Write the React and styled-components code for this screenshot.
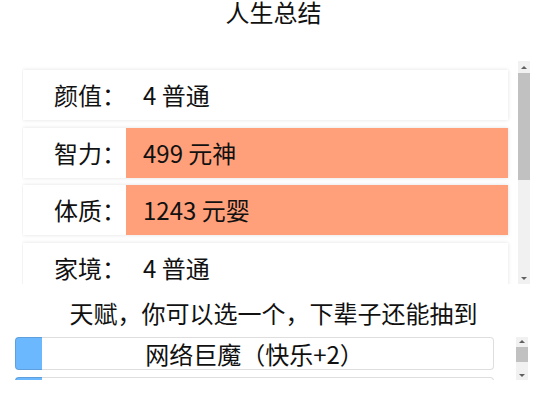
import styled, { createGlobalStyle } from 'styled-components';

const GlobalStyle = createGlobalStyle`
  html, body {
    margin: 0;
    padding: 0;
    background: #fff;
  }
  body {
    font-family: "Noto Sans CJK SC", "Noto Sans", sans-serif;
    color: #111;
  }
`;

const Page = styled.div`
  width: 547px;
`;

const Title = styled.div`
  text-align: center;
  font-size: 24px;
  line-height: 24px;
`;

// a list and its scrollbar side by side
const ScrollBox = styled.div`
  display: flex;
  height: ${(p) => p.$height}px;
  margin: ${(p) => p.$margin};
`;

const SummaryList = styled.div`
  flex: 1;
  min-width: 0;
  padding: 9px 10px 0 1px;
  overflow: hidden;
`;

const Track = styled.div`
  width: 12px;
  flex-shrink: 0;
  display: flex;
  flex-direction: column;
  background: #f1f1f1;
`;

const ArrowButton = styled.div`
  height: ${(p) => p.$size}px;
  flex-shrink: 0;
  display: flex;
  align-items: center;
  justify-content: center;

  &::before {
    content: '';
    width: 0;
    height: 0;
    border-left: 3px solid transparent;
    border-right: 3px solid transparent;
    ${(p) => (p.$down ? 'border-top' : 'border-bottom')}: 3px solid #606060;
  }
`;

const Rail = styled.div`
  flex: 1;
  padding-top: ${(p) => p.$offset}px;
`;

const Thumb = styled.div`
  background: #c1c1c1;
`;

const Scrollbar = ({ button, thumb, offset = 0 }) => (
  <Track>
    <ArrowButton $size={button} />
    <Rail $offset={offset}>
      <Thumb style={{ height: thumb }} />
    </Rail>
    <ArrowButton $size={button} $down />
  </Track>
);

const Row = styled.div`
  display: flex;
  height: 50px;
  margin-bottom: 7.5px;
  background: #fff;
  box-shadow: 0 0 4px rgba(0, 0, 0, 0.12);
  font-size: 24px;
  line-height: 50px;
`;

const Label = styled.div`
  width: 103px;
  flex-shrink: 0;
  text-align: right;
`;

const Value = styled.div`
  flex: 1;
  padding-left: 17px;
  background: ${(p) => (p.$grade ? '#ffa07a' : 'transparent')};
`;

const Heading = styled.div`
  margin: 17px 0 12px;
  text-align: center;
  font-size: 24px;
  line-height: 24px;
`;

const TalentList = styled.div`
  flex: 1;
  min-width: 0;
  padding-right: 22px;
  overflow: hidden;
`;

const Talent = styled.div`
  box-sizing: border-box;
  height: 33px;
  border: 1px solid rgba(0, 0, 0, 0.13);
  border-radius: 4px;
  background: linear-gradient(90deg, #6cb8ff 27px, #fff 27px) border-box;
  text-align: center;
  font-size: 24px;
  line-height: 31px;

  & + & {
    margin-top: 7px;
  }
`;

const summary = [
  { label: '颜值：', value: '4 普通' },
  { label: '智力：', value: '499 元神', grade: true },
  { label: '体质：', value: '1243 元婴', grade: true },
  { label: '家境：', value: '4 普通' },
  { label: '快乐：', value: '6 幸福' },
  { label: '享年：', value: '87 长寿' },
  { label: '总评：', value: '1895 传说', grade: true },
];

const talents = ['网络巨魔（快乐+2）', '天生乐观（快乐+1）'];

export default function App() {
  return (
    <>
      <GlobalStyle />
      <Page>
        <Title>人生总结</Title>
        <ScrollBox $height={223} $margin="37px 17px 0 22px">
          <SummaryList>
            {summary.map((row) => (
              <Row key={row.label}>
                <Label>{row.label}</Label>
                <Value $grade={row.grade}>{row.value}</Value>
              </Row>
            ))}
          </SummaryList>
          <Scrollbar button={12} thumb={107} />
        </ScrollBox>
        <Heading>天赋，你可以选一个，下辈子还能抽到</Heading>
        <ScrollBox $height={43} $margin="0 19px 0 15px">
          <TalentList>
            {talents.map((t) => (
              <Talent key={t}>{t}</Talent>
            ))}
          </TalentList>
          <Scrollbar button={9} thumb={15} offset={1} />
        </ScrollBox>
      </Page>
    </>
  );
}
